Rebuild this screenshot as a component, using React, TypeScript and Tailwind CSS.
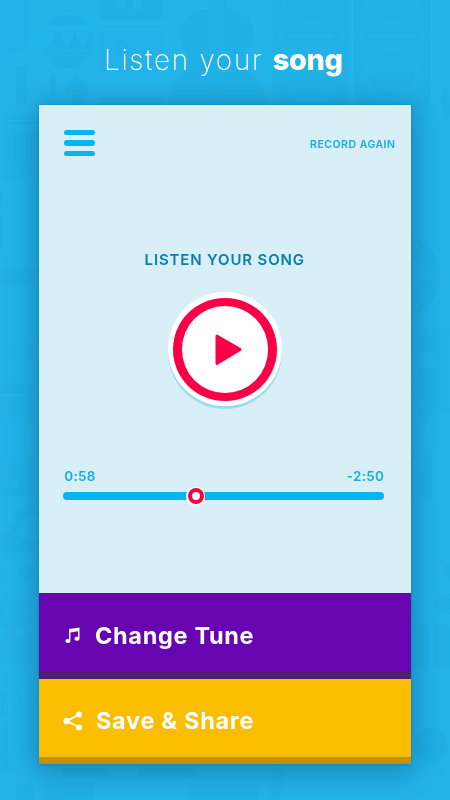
import type { ReactNode } from "react";

const formatTime = (seconds: number) =>
    `${Math.floor(seconds / 60)}:${String(seconds % 60).padStart(2, "0")}`;

// Faint pattern of instruments and speakers behind the page
function Backdrop() {
    return (
        <svg className="absolute inset-0" width="450" height="800" viewBox="0 0 450 800" fill="#1b9fd0" aria-hidden="true">
            <g opacity="0.18">
                <circle cx="67.500" cy="42" r="26.500" />
                <path d="M46 25h43l5 16-3 10H44l-3-11z" fill="#25bcf5" />
                <path d="M46 50l13-20 8 20 8-20 8 20 9-20v20z" />
                <rect x="100" y="-10" width="62" height="30" rx="4" />
                <path d="M116 0h9v9h-9zM133 0h9v9h-9z" fill="#25bcf5" />
                <rect x="100" y="31" width="62" height="42" rx="4" opacity="0.3" />
                <path d="M117 38l14 9-14 8z" />
                <rect x="100" y="97" width="62" height="12" rx="4" />
                <path d="M77 75l14 18h-8v15H72V93h-9zM50 74h6v22h-6zM16 66h11v38H16z" />
                <path d="M-8 0h13q-2 20-13 24zM0 0h28v40q0 15-28 15z" opacity="0.3" />
                <path d="M207 9c-16 2-27 12-27 24 0 15 13 17 8 31-4 12-20 19-20 45h98c0-26-16-33-20-45-5-14 8-16 8-31 0-12-12-22-28-24z" />
                <path d="M208 0h18v109h-18z" />
                <path d="M210 0h1v108h-1zM214 0h1v108h-1zM218 0h1v108h-1zM222 0h1v108h-1z" fill="#25bcf5" />
                <path d="M273 0h76v109h-76zM354 0h76v109h-76z" opacity="0.75" />
                <g fill="none" stroke="#25bcf5" strokeWidth="6" opacity="0.5">
                    <circle cx="311" cy="-1" r="27" />
                    <circle cx="392" cy="-1" r="27" />
                    <circle cx="311" cy="73" r="27" />
                    <circle cx="392" cy="73" r="27" />
                </g>
                <g opacity="0.65">
                    <circle cx="311" cy="0" r="19" />
                    <circle cx="392" cy="0" r="19" />
                    <circle cx="311" cy="75" r="20" />
                    <circle cx="392" cy="75" r="20" />
                </g>
                <g fill="#25bcf5">
                    <rect x="289" y="34" width="44" height="4" rx="2" />
                    <rect x="370" y="34" width="44" height="4" rx="2" />
                    <circle cx="281" cy="36" r="2.500" />
                    <circle cx="342" cy="36" r="2.500" />
                    <circle cx="361" cy="36" r="2.500" />
                    <circle cx="422" cy="36" r="2.500" />
                    <circle cx="423" cy="113" r="3" />
                </g>
                <path d="M441 100l4-18 5 20v15h-5z" />
                <path d="M7 117h32v2H7zM7 122h32v2H7z" />
                <path d="M0 134h39v47H0z" opacity="0.4" />
                <path d="M15 134h3v32h-3zM25 134h3v32h-3z" />
                <path d="M0 191l3 1-3 21zM0 214h2v35H0z" />
                <path d="M0 269l39-2v19l-39 1zM0 383h39v11H0z" />
                <circle cx="28" cy="354" r="18" opacity="0.25" />
                <circle cx="28" cy="354" r="9" opacity="0.5" />
                <path d="M0 396h39v93H0z" opacity="0.55" />
                <circle cx="12" cy="440" r="23" fill="#25bcf5" opacity="0.6" />
                <circle cx="16" cy="483" r="3" fill="#25bcf5" />
                <path d="M0 489h39v7H0z" />
                <path d="M0 533h9c4-8 4-28 21-29h9v10c-11-1-20 6-20 24h20v15H0z" />
                <path d="M0 567l8 7-8 17zM0 600h39v65H0z" opacity="0.65" />
                <circle cx="27" cy="573" r="8" />
                <path d="M3 609h12l-6 10zM20 609h15l-7 10zM15 628h17l-8 9zM0 628h8l-8 9z" fill="#25bcf5" />
                <path d="M13 687q14 12 0 25M28 681q18 19 0 37M0 690q5 9 0 29" fill="none" stroke="#1b9fd0" strokeWidth="3" opacity="0.7" />
                <path d="M0 728h9v44H0zM16 783h18v17H16zM41 783h53v17H41zM62 768h46v10H62zM138 765h58v14h-58zM187 783h72v17h-72zM273 767l13 4-8 29h-9z" opacity="0.5" />
                <path d="M405 100h23v20h-23zM442 100h8v16z" opacity="0.7" />
                <circle cx="398" cy="276" r="42" />
                <path d="M410 259l24 16-24 16z" fill="#25bcf5" opacity="0.5" />
                <path d="M411 329h39v82h-12l-16 17-9-41 8-22 15 4-3-15-22-4z" opacity="0.6" />
                <path d="M410 450h23v51h-23z" opacity="0.6" />
                <circle cx="418" cy="465" r="7" fill="#25bcf5" opacity="0.6" />
                <path d="M445 564h5v15h-5zM434 598h16v12h-16zM411 625h18v43h-18zM434 625h16v43h-16z" opacity="0.7" />
                <path d="M411 600l8 17h-8z" />
                <circle cx="431" cy="745" r="17" />
            </g>
        </svg>
    );
}

function MusicIcon() {
    return (
        <svg width="15" height="17" viewBox="0 0 15 17" fill="white">
            <path d="M4 2L14.500 0.500V11.800a2.500 1.900 0 1 1-1.400-1.700V4.200L5.400 5.400V14a2.500 1.900 0 1 1-1.400-1.700z" />
        </svg>
    );
}

function ShareIcon() {
    return (
        <svg width="20" height="20" viewBox="0 0 20 20" fill="white">
            <path d="M16 3.500L4 10l12 6.500" fill="none" stroke="white" strokeWidth="1.700" />
            <circle cx="16" cy="3.400" r="3" />
            <circle cx="3.700" cy="10" r="3.300" />
            <circle cx="16" cy="16.600" r="3" />
        </svg>
    );
}

function ActionButton({ icon, label, className }: { icon: ReactNode; label: string; className: string }) {
    return (
        <button className={`flex w-full items-center text-left text-[23.500px] font-bold text-white ${className}`}>
            <span className="shrink-0">{icon}</span>
            <span className="whitespace-nowrap">{label}</span>
        </button>
    );
}

export default function App() {
    const elapsed = 58;
    const remaining = 170;

    return (
        <div className="relative h-[800px] w-[450px] overflow-hidden bg-[#23b4ea] font-['Inter',sans-serif]">
            <Backdrop />

            <div className="relative flex h-full flex-col">
                <h1 className="h-[105px] pt-[39px] pl-[104px] text-[28px] leading-[42px] font-extralight whitespace-nowrap text-white">
                    <span className="tracking-[1.630px]">Listen your </span>
                    <span className="text-[29px] font-extrabold tracking-[-0.4px]">song</span>
                </h1>

                <main className="ml-[39px] flex h-[659px] w-[371.500px] flex-col bg-[#d8eff7] shadow-[0_0_2px_#087fb0,0_5px_28px_4px_rgba(10,85,125,0.48)]">
                    <header className="flex h-[78px] items-center justify-between pr-[15px] pl-[25px]">
                        <button className="mb-[2px] flex w-[31px] flex-col gap-[5px]" aria-label="Menu">
                            <span className="h-[5.300px] w-full rounded-full bg-[#05b5f1]" />
                            <span className="h-[5.300px] w-full rounded-full bg-[#05b5f1]" />
                            <span className="h-[5.300px] w-full rounded-full bg-[#05b5f1]" />
                        </button>
                        <button className="mt-[2px] text-[10.500px] font-semibold tracking-[0.5px] text-[#12acea]">RECORD AGAIN</button>
                    </header>

                    <section className="flex flex-1 flex-col items-center">
                        <h2 className="mt-[67px] text-[15px] leading-5 font-semibold tracking-[0.85px] text-[#087fae]">
                            LISTEN YOUR SONG
                        </h2>
                        <button
                            className="mt-[22.400px] flex h-[114px] w-[114px] items-center justify-center rounded-full bg-white shadow-[0_3px_0_#9adcf2]"
                            aria-label="Play"
                        >
                            <span className="flex h-[103.500px] w-[103.500px] items-center justify-center rounded-full bg-[#fa0046]">
                                <span className="flex h-[86.500px] w-[86.500px] items-center justify-center rounded-full bg-white">
                                    <svg className="ml-[7px] mt-[2px]" width="27" height="32" viewBox="0 0 27 32" fill="#fa0046">
                                        <path d="M0.500 2.500Q0.500-0.500 3 1L25.500 14Q27.500 15.500 25.500 17L3 30.500Q0.500 32 0.500 29z" />
                                    </svg>
                                </span>
                            </span>
                        </button>

                        <div className="mt-[60px] mr-[2px] w-[321px]">
                            <div className="flex justify-between pl-[1px] text-[13.500px] leading-5 font-semibold tracking-[0.3px] text-[#12acea]">
                                <span>{formatTime(elapsed)}</span>
                                <span>-{formatTime(remaining)}</span>
                            </div>
                            <div className="mt-[6px] flex h-2 items-center rounded-full bg-[#05b5f1] pl-[123px]">
                                <span className="flex h-[19px] w-[19px] items-center justify-center rounded-full bg-white">
                                    <span className="h-4 w-4 rounded-full border-4 border-[#f30440] bg-white" />
                                </span>
                            </div>
                        </div>
                    </section>

                    <ActionButton
                        icon={<MusicIcon />}
                        label="Change Tune"
                        className="h-[86px] gap-[15px] border-b-[7px] border-[#4b226b] bg-[#6705b0] pt-[6px] pl-[26px] tracking-[0.670px]"
                    />
                    <ActionButton
                        icon={<ShareIcon />}
                        label="Save & Share"
                        className="h-[85px] gap-[13px] border-b-[7px] border-[#c39305] bg-[#fbbd00] pt-[6px] pl-[24px] tracking-[0.700px]"
                    />
                </main>
            </div>
        </div>
    );
}
